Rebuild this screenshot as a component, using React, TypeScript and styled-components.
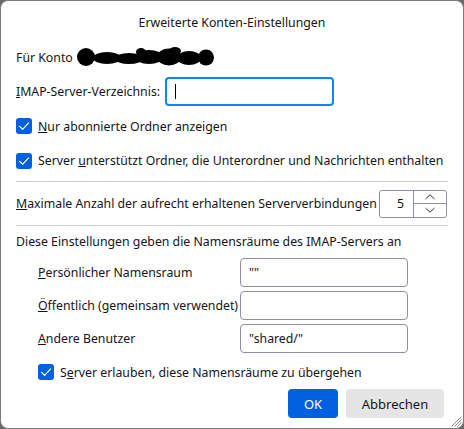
import { FunctionComponent, ReactNode } from "react";
import { createGlobalStyle, styled } from "styled-components";

const GlobalStyle = createGlobalStyle`
  html, body {
    margin: 0;
    padding: 0;
    background: #6a6a6a;
  }
  body {
    font-family: "Noto Sans", "Open Sans", sans-serif;
    font-size: 12.3px;
    color: #15141a;
  }
`;

const Hotkey: FunctionComponent<{ children: ReactNode }> = ({ children }) => (
  <u>{children}</u>
);

const CheckMark: FunctionComponent = () => (
  <Box>
    <svg width="16" height="16" viewBox="0 0 16 16">
      <path
        d="M3.6 8.4 L6.6 11.3 L12.6 4.9"
        fill="none"
        stroke="#fff"
        strokeWidth="1.2"
        strokeLinecap="round"
        strokeLinejoin="round"
      />
    </svg>
  </Box>
);

const Check: FunctionComponent<{ children: ReactNode; indent?: boolean; h: number }> = ({
  children,
  indent,
  h,
}) => (
  <CheckRow $indent={indent} $h={h}>
    <CheckMark />
    <span>{children}</span>
  </CheckRow>
);

// scribbled-over account name
const Scribble: FunctionComponent = () => (
  <svg width="140" height="22" viewBox="0 0 140 22" style={{ marginLeft: 4 }}>
    <g fill="#000">
      <ellipse cx="9" cy="11" rx="9" ry="9" />
      <ellipse cx="30" cy="12" rx="14" ry="6" />
      <ellipse cx="52" cy="12.5" rx="14" ry="5.5" />
      <ellipse cx="72" cy="11" rx="14" ry="7" />
      <ellipse cx="92" cy="11" rx="12" ry="8.5" />
      <ellipse cx="112" cy="12" rx="12" ry="7" />
      <ellipse cx="129" cy="11.5" rx="8" ry="8" />
      <ellipse cx="64" cy="6" rx="5" ry="4" />
      <ellipse cx="98" cy="5" rx="6" ry="4" />
    </g>
  </svg>
);

export default function App() {
  return (
    <>
      <GlobalStyle />
      <Dialog>
        <Title>Erweiterte Konten-Einstellungen</Title>

        <Row $h={26}>
          Für Konto
          <Scribble />
        </Row>

        <Row $h={42} $gap={5}>
          <span>
            <Hotkey>I</Hotkey>MAP-Server-Verzeichnis:
          </span>
          <FocusField>
            <Caret />
          </FocusField>
        </Row>

        <Check h={28}>
          <Hotkey>N</Hotkey>ur abonnierte Ordner anzeigen
        </Check>
        <Check h={41}>
          Server <Hotkey>u</Hotkey>nterstützt Ordner, die Unterordner und
          Nachrichten enthalten
        </Check>

        <Divider />

        <Row $h={43} $spread>
          <span>
            <Hotkey>M</Hotkey>aximale Anzahl der aufrecht erhaltenen
            Serververbindungen
          </span>
          <Spinner>
            <SpinValue>5</SpinValue>
            <SpinArrows>
              <SpinButton>
                <svg width="12" height="8" viewBox="0 0 12 8">
                  <path d="M1.5 6 L6 1.8 L10.5 6" fill="none" stroke="#333" strokeWidth="1" />
                </svg>
              </SpinButton>
              <SpinButton $bottom>
                <svg width="12" height="8" viewBox="0 0 12 8">
                  <path d="M1.5 2 L6 6.2 L10.5 2" fill="none" stroke="#333" strokeWidth="1" />
                </svg>
              </SpinButton>
            </SpinArrows>
          </Spinner>
        </Row>

        <Divider />

        <Row $h={30}>Diese Einstellungen geben die Namensräume des IMAP-Servers an</Row>

        <NamespaceGrid>
          <span>
            <Hotkey>P</Hotkey>ersönlicher Namensraum
          </span>
          <Field defaultValue={'""'} />
          <span>
            <Hotkey>Ö</Hotkey>ffentlich (gemeinsam verwendet)
          </span>
          <Field defaultValue="" />
          <span>
            <Hotkey>A</Hotkey>ndere Benutzer
          </span>
          <Field defaultValue={'"shared/"'} />
        </NamespaceGrid>

        <Check indent h={34}>
          S<Hotkey>e</Hotkey>rver erlauben, diese Namensräume zu übergehen
        </Check>

        <Buttons>
          <Button $primary>OK</Button>
          <Button $width={98}>Abbrechen</Button>
        </Buttons>

        <Grip>
          <svg width="12" height="12" viewBox="0 0 12 12">
            <path
              d="M11.5 1.5 L1.5 11.5 M11.5 4.5 L4.5 11.5 M11.5 7.5 L7.5 11.5"
              stroke="#8a8a8a"
              strokeWidth="1"
            />
          </svg>
        </Grip>
      </Dialog>
    </>
  );
}

const Dialog = styled.div`
  position: relative;
  width: 464px;
  height: 429px;
  box-sizing: border-box;
  border: 1px solid #7b7b7b;
  border-radius: 8px;
  background: #fff;
  padding: 0 15px;
  display: flex;
  flex-direction: column;
  overflow: hidden;
`;

const Title = styled.div`
  height: 43px;
  line-height: 43px;
  text-align: center;
`;

const Row = styled.div<{ $h: number; $gap?: number; $spread?: boolean }>`
  height: ${(p) => p.$h}px;
  display: flex;
  align-items: center;
  gap: ${(p) => p.$gap ?? 0}px;
  justify-content: ${(p) => (p.$spread ? "space-between" : "flex-start")};
  white-space: nowrap;
`;

const CheckRow = styled.div<{ $indent?: boolean; $h: number }>`
  height: ${(p) => p.$h}px;
  display: flex;
  align-items: center;
  gap: 6px;
  padding-left: ${(p) => (p.$indent ? 22 : 0)}px;
  white-space: nowrap;
`;

const Box = styled.span`
  width: 16px;
  height: 16px;
  flex: none;
  border-radius: 3px;
  background: #0061e0;
  display: flex;
`;

const Divider = styled.hr`
  width: 100%;
  margin: 0;
  border: none;
  border-top: 1px solid #cfcfd8;
`;

const FocusField = styled.div`
  position: relative;
  width: 169px;
  height: 29px;
  box-sizing: border-box;
  border: 2px solid #0a84ff;
  border-radius: 4px;
`;

const Caret = styled.span`
  position: absolute;
  left: 8px;
  top: 5px;
  width: 1px;
  height: 15px;
  background: #000;
`;

const Spinner = styled.div`
  width: 68px;
  height: 28px;
  box-sizing: border-box;
  margin-right: 1px;
  border: 1px solid #8f8f9d;
  border-radius: 3px;
  display: flex;
`;

const SpinValue = styled.div`
  flex: 1;
  display: flex;
  align-items: center;
  justify-content: flex-end;
  padding-right: 9px;
`;

const SpinArrows = styled.div`
  width: 32px;
  border-left: 1px solid #8f8f9d;
  display: flex;
  flex-direction: column;
`;

const SpinButton = styled.div<{ $bottom?: boolean }>`
  flex: 1;
  display: flex;
  align-items: center;
  justify-content: center;
  border-top: ${(p) => (p.$bottom ? "1px solid #8f8f9d" : "none")};
`;

const NamespaceGrid = styled.div`
  display: grid;
  grid-template-columns: 202px 168px;
  grid-auto-rows: 33px;
  align-items: center;
  padding-left: 22px;
`;

const Field = styled.input`
  width: 168px;
  height: 29px;
  box-sizing: border-box;
  border: 1px solid #8f8f9d;
  border-radius: 4px;
  padding: 0 8px;
  font: inherit;
  color: inherit;
  outline: none;
`;

const Buttons = styled.div`
  display: flex;
  justify-content: flex-end;
  gap: 8px;
  padding-right: 4px;
`;

const Button = styled.button<{ $primary?: boolean; $width?: number }>`
  width: ${(p) => p.$width ?? 50}px;
  height: 29px;
  border: none;
  border-radius: 4px;
  font: inherit;
  font-size: 13px;
  background: ${(p) => (p.$primary ? "#0061e0" : "#e5e5e5")};
  color: ${(p) => (p.$primary ? "#fff" : "#15141a")};
`;

const Grip = styled.div`
  position: absolute;
  right: 1px;
  bottom: 1px;
  display: flex;
`;
